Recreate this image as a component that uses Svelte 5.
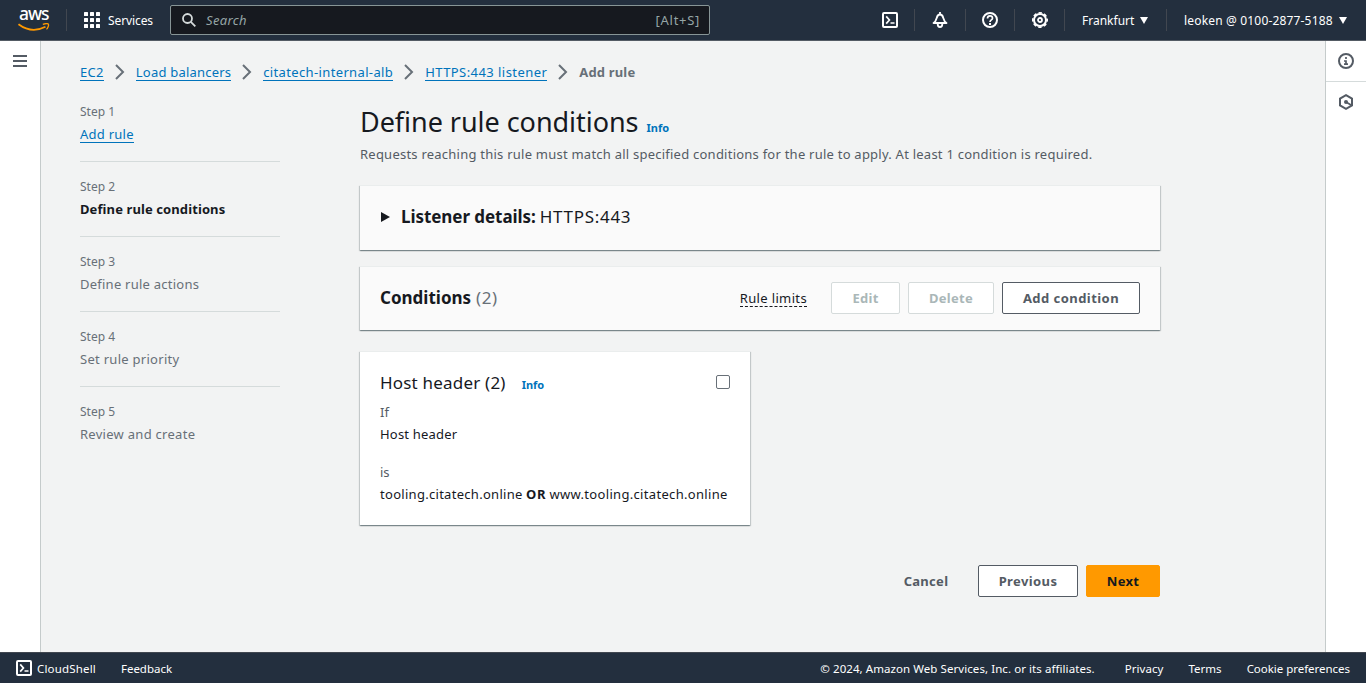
<script>
  const crumbs = [
    { text: 'EC2', cls: 'c1' },
    { text: 'Load balancers', cls: 'c2' },
    { text: 'citatech-internal-alb', cls: 'c3' },
    { text: 'HTTPS:443 listener', cls: 'c4' }
  ];
  const steps = [
    { title: 'Add rule', cls: 'link' },
    { title: 'Define rule conditions', cls: 'current' },
    { title: 'Define rule actions', cls: 's3' },
    { title: 'Set rule priority', cls: 's4' },
    { title: 'Review and create', cls: 's5' }
  ];
</script>

{#snippet shellIcon()}
  <svg class="icon" width="16" height="16" viewBox="0 0 16 16" fill="none" stroke="currentColor" stroke-width="2">
    <rect x="1" y="1" width="14" height="14" rx="1" />
    <path d="M4.200 4.400L7.400 8l-3.200 3.600M8.500 11H12.500" stroke-width="1.700" />
  </svg>
{/snippet}

<div class="page">
  <header>
    <div class="logo">
      <span>aws</span>
      <svg width="32" height="8" viewBox="0 0 32 8">
        <path d="M.5 1.200C9 7.600 19 8.200 27.500 3.800" fill="none" stroke="#f90" stroke-width="1.800" />
        <path d="M24.800 1.400c2.500-.9 5-.9 5.600-.2.500.9-.3 3.700-1.900 5.200" fill="none" stroke="#f90" stroke-width="1.300" />
      </svg>
    </div>
    <i class="sep"></i>
    <div class="services">
      <svg width="16" height="16" fill="#fff">
        {#each [0, 6, 12] as y}{#each [0, 6, 12] as x}<rect {x} {y} width="4" height="4" rx=".5" />{/each}{/each}
      </svg>
      <span>Services</span>
    </div>
    <div class="search">
      <svg width="14" height="14" viewBox="0 0 14 14" fill="none" stroke="#d5dbdb" stroke-width="1.800">
        <circle cx="5.500" cy="5.500" r="4.500" /><path d="M8.800 8.800l4.500 4.500" />
      </svg>
      <em>Search</em>
      <span>[Alt+S]</span>
    </div>
    <nav>
      <div class="cell">{@render shellIcon()}</div>
      <i class="sep"></i>
      <div class="cell bell">
        <svg width="16" height="16" viewBox="0 0 16 16" fill="none" stroke="#fff" stroke-width="2">
          <path d="M8 0v2M1.500 11h13c-2.200-1.200-2.600-2.700-3.200-5C10.700 3.500 9.700 2.500 8 2.500S5.300 3.500 4.700 6c-.6 2.300-1 3.800-3.200 5z" stroke-linejoin="round" stroke-width="1.800" />
          <path d="M5.700 12c0 4 4.600 4 4.600 0" stroke-width="1.800" />
        </svg>
      </div>
      <i class="sep"></i>
      <div class="cell help">
        <svg width="16" height="16" viewBox="0 0 16 16" fill="none" stroke="#fff" stroke-width="2">
          <circle cx="8" cy="8" r="7" />
          <path d="M5.500 6.500c0-3.500 5-3.200 5-.3C10.500 8 8 7.700 8 10" stroke-width="1.700" /><path d="M8 11v2" />
        </svg>
      </div>
      <i class="sep"></i>
      <div class="cell">
        <svg width="16" height="16" viewBox="0 0 16 16" fill="none" stroke="#fff">
          <circle cx="8" cy="8" r="6" stroke-width="2" />
          <circle cx="8" cy="8" r="7.200" stroke-width="1.600" stroke-dasharray="3.400 2.255" stroke-dashoffset="1.700" />
          <circle cx="8" cy="8" r="2" stroke-width="1.800" />
        </svg>
      </div>
      <i class="sep"></i>
      <div class="region"><span>Frankfurt</span><b class="caret"></b></div>
      <i class="sep"></i>
      <div class="account"><span>leoken @ 0100-2877-5188</span><b class="caret"></b></div>
    </nav>
  </header>

  <div class="body">
    <aside class="left">
      <svg width="14" height="12" fill="#545b64"><path d="M0 0h14v2H0zM0 5h14v2H0zM0 10h14v2H0z" /></svg>
    </aside>

    <main>
      <div class="crumbs">
        {#each crumbs as c}
          <a class={c.cls} href="#top">{c.text}</a>
          <svg width="10" height="16" viewBox="0 0 10 16" fill="none" stroke="#687078" stroke-width="2"><path d="M1 1l7 7-7 7" /></svg>
        {/each}
        <strong>Add rule</strong>
      </div>

      <div class="columns">
        <ol>
          {#each steps as s, i}
            <li>
              <small>Step {i + 1}</small>
              <div><span class={s.cls}>{s.title}</span></div>
            </li>
          {/each}
        </ol>

        <section>
          <div class="title"><h1>Define rule conditions</h1><a class="info" href="#top">Info</a></div>
          <p class="desc">Requests reaching this rule must match all specified conditions for the rule to apply. At least 1 condition is required.</p>

          <div class="box details">
            <svg width="9" height="10"><path d="M0 0l9 5-9 5z" fill="#16191f" /></svg>
            <h2>Listener details:</h2><span>HTTPS:443</span>
          </div>

          <div class="box conditions">
            <h2>Conditions</h2><span class="count">(2)</span>
            <span class="limits">Rule limits</span>
            <button class="edit" disabled>Edit</button>
            <button class="delete" disabled>Delete</button>
            <button class="add">Add condition</button>
          </div>

          <div class="box card">
            <div class="cardhead"><h3>Host header (2)</h3><a class="info" href="#top">Info</a><i class="check"></i></div>
            <div class="key">If</div>
            <div class="val"><span class="v1">Host header</span></div>
            <div class="key gap">is</div>
            <div class="val"><span class="v2">tooling.citatech.online</span> <b>OR</b> <span class="v3">www.tooling.citatech.online</span></div>
          </div>

          <div class="actions">
            <button class="cancel">Cancel</button>
            <button class="prev">Previous</button>
            <button class="next">Next</button>
          </div>
        </section>
      </div>
    </main>

    <aside class="right">
      <div>
        <svg width="16" height="16" viewBox="0 0 16 16" fill="none" stroke="#545b64" stroke-width="2">
          <circle cx="8" cy="8" r="7" /><path d="M8 4v2M6 8h2v3M6 11.200h4" stroke-width="1.700" />
        </svg>
      </div>
      <div>
        <svg width="16" height="16" viewBox="0 0 16 16" fill="none" stroke="#545b64" stroke-width="2">
          <path d="M8 1.200l6 3.400v6.800l-6 3.400-6-3.400V4.600z" /><circle cx="8" cy="8" r="2" fill="#545b64" stroke="none" /><path d="M8 8l5 3" stroke-width="1.700" />
        </svg>
      </div>
    </aside>
  </div>

  <footer>
    {@render shellIcon()}
    <span class="f1">CloudShell</span>
    <span class="f2">Feedback</span>
    <span class="f3">© 2024, Amazon Web Services, Inc. or its affiliates.</span>
    <span class="f4">Privacy</span>
    <span class="f5">Terms</span>
    <span class="f6">Cookie preferences</span>
  </footer>
</div>

<style>
  :global(body) { overflow: hidden; }
  .page { width: 1366px; height: 683px; display: flex; flex-direction: column; font: 13px/22px "Noto Sans", sans-serif; color: #16191f; background: #f2f3f3; white-space: nowrap; }
  * { box-sizing: border-box; }
  svg { flex: none; display: block; }
  h1, h2, h3, p, ol { margin: 0; padding: 0; }
  header { height: 41px; flex: none; background: #232f3e; border-bottom: 1px solid #545b64; display: flex; align-items: center; color: #fff; font-size: 12px; }
  .sep { width: 1px; height: 22px; background: #414750; flex: none; }
  .logo { width: 66px; padding-left: 18px; height: 40px; padding-top: 6px; }
  .logo span { display: block; height: 17px; line-height: 15px; padding-left: 1px; font-size: 17.500px; font-weight: 500; letter-spacing: -1.100px; }
  .services { display: flex; align-items: center; gap: 8px; width: 103px; padding-left: 17px; }
  .services span { letter-spacing: -.1px; }
  .services span, .region span, .account span { padding-top: 2px; }
  .search { width: 540px; height: 30px; display: flex; align-items: center; background: #16191f; border: 1px solid #879596; border-radius: 2px; padding: 0 9px 0 11px; color: #95a5a6; font-size: 13px; }
  .search em { margin-left: 10px; flex: 1; letter-spacing: .35px; }
  .search span { letter-spacing: .7px; }
  nav { display: flex; align-items: center; margin-left: 155px; flex: 1; }
  .cell { width: 49px; display: flex; justify-content: center; }
  .bell { width: 50px; }
  .help { width: 48px; }
  .region { width: 101px; padding-left: 17px; display: flex; align-items: center; gap: 6px; }
  .account { padding-left: 17px; display: flex; align-items: center; gap: 6px; }
  .account span { letter-spacing: .17px; }
  .caret { border: 4px solid transparent; border-top: 7px solid #fff; border-bottom: 0; }
  .body { flex: 1; display: flex; }
  aside { background: #fff; flex: none; }
  .left { width: 41px; border-right: 1px solid #c5cbcb; padding: 14px 0 0 13px; }
  .right { width: 41px; border-left: 1px solid #c5cbcb; }
  .right div { height: 41px; display: grid; place-items: center; }
  .right div:first-child { border-bottom: 1px solid #d5dbdb; }
  .right div:last-child { height: 40px; }
  main { flex: 1; padding: 20px 0 0 39px; }
  a { color: #0073bb; text-decoration: none; }
  .crumbs { display: flex; align-items: center; height: 22px; }
  .crumbs a, .link { border-bottom: 1px solid #0073bb; }
  .crumbs a { line-height: 16px; margin-top: 1px; }
  .c1 { letter-spacing: .3px; }
  .c2 { letter-spacing: .21px; }
  .c3 { letter-spacing: .36px; }
  .c4 { letter-spacing: .44px; }
  .crumbs svg { margin: 0 11px; }
  .crumbs strong { color: #687078; letter-spacing: .17px; }
  .columns { display: flex; padding-top: 18px; }
  ol { width: 280px; list-style: none; }
  li { width: 200px; height: 61px; border-bottom: 1px solid #d5dbdb; margin-bottom: 14px; color: #687078; }
  li:last-child { border: 0; }
  small { display: block; font-size: 12px; }
  .link { color: #0073bb; display: inline-block; line-height: 16px; letter-spacing: .25px; }
  .current { color: #16191f; font-weight: 700; letter-spacing: .1px; }
  .s3 { letter-spacing: .24px; }
  .s4, .s5 { letter-spacing: .28px; }
  section { width: 800px; }
  .title { display: flex; align-items: baseline; height: 42px; line-height: 42px; }
  h1 { font-size: 27px; font-weight: 400; letter-spacing: -.04px; }
  .info { font-size: 11px; font-weight: 700; margin-left: 8px; }
  .desc { color: #545b64; letter-spacing: .235px; }
  .box { background: #fafafa; border-top: 1px solid #eaeded; box-shadow: 0 1px 1px rgba(0,28,36,.3), 1px 1px 1px rgba(0,28,36,.15), -1px 1px 1px rgba(0,28,36,.15); display: flex; align-items: center; padding: 0 20px; }
  h2 { font-size: 17px; }
  .details { height: 65px; margin-top: 20px; font-size: 17px; padding-bottom: 3px; letter-spacing: .7px; }
  .details svg { margin-left: 1px; }
  .details h2 { margin: 0 4px 0 11px; letter-spacing: -.06px; }
  .conditions { height: 64px; margin-top: 16px; padding-bottom: 2px; }
  .count { color: #687078; font-size: 17px; margin-left: 5px; flex: 1; letter-spacing: .5px; }
  .limits { border-bottom: 1px dashed #16191f; line-height: 16px; margin: 1px 24px 0 0; letter-spacing: .36px; }
  button { height: 32px; border: 1px solid #545b64; border-radius: 2px; padding: 0; background: #fff; color: #545b64; font: 700 13px "Noto Sans", sans-serif; letter-spacing: .3px; }
  button:disabled { color: #aab7b8; border-color: #d5dbdb; }
  .edit { width: 69px; margin-right: 8px; }
  .delete { width: 86px; margin-right: 8px; }
  .add { width: 138px; letter-spacing: .45px; }
  .card { width: 390px; height: 174px; display: block; background: #fff; margin-top: 21px; padding: 19px 20px; }
  .cardhead { display: flex; align-items: baseline; height: 30px; line-height: 24px; }
  h3 { font-size: 17px; font-weight: 400; margin-right: 8px; letter-spacing: .2px; }
  .check { width: 14px; height: 14px; border: 1px solid #687078; border-radius: 2px; background: #fff; margin-left: auto; align-self: flex-start; margin-top: 4px; }
  .key { color: #545b64; }
  .val b { letter-spacing: .6px; }
  .v1 { letter-spacing: .2px; }
  .v2 { letter-spacing: .29px; }
  .v3 { letter-spacing: .32px; }
  .gap { margin-top: 16px; }
  .actions { display: flex; justify-content: flex-end; margin-top: 40px; gap: 8px; }
  .cancel { background: none; border-color: transparent; width: 88px; }
  .prev { width: 100px; letter-spacing: .4px; }
  .next { width: 74px; background: #f90; border-color: #f90; color: #16191f; }
  footer { height: 31px; flex: none; background: #232f3e; border-top: 1px solid #414750; color: #fff; font-size: 11.500px; display: flex; align-items: center; padding: 0 16px; }
  footer span { padding-top: 2px; }
  .f1 { margin-left: 5px; letter-spacing: .17px; }
  .f2 { margin-left: 25px; flex: 1; }
  .f3 { letter-spacing: .07px; }
  .f4 { margin-left: 30px; letter-spacing: .07px; }
  .f5 { margin-left: 25px; }
  .f6 { margin-left: 25px; letter-spacing: -.03px; }
</style>
